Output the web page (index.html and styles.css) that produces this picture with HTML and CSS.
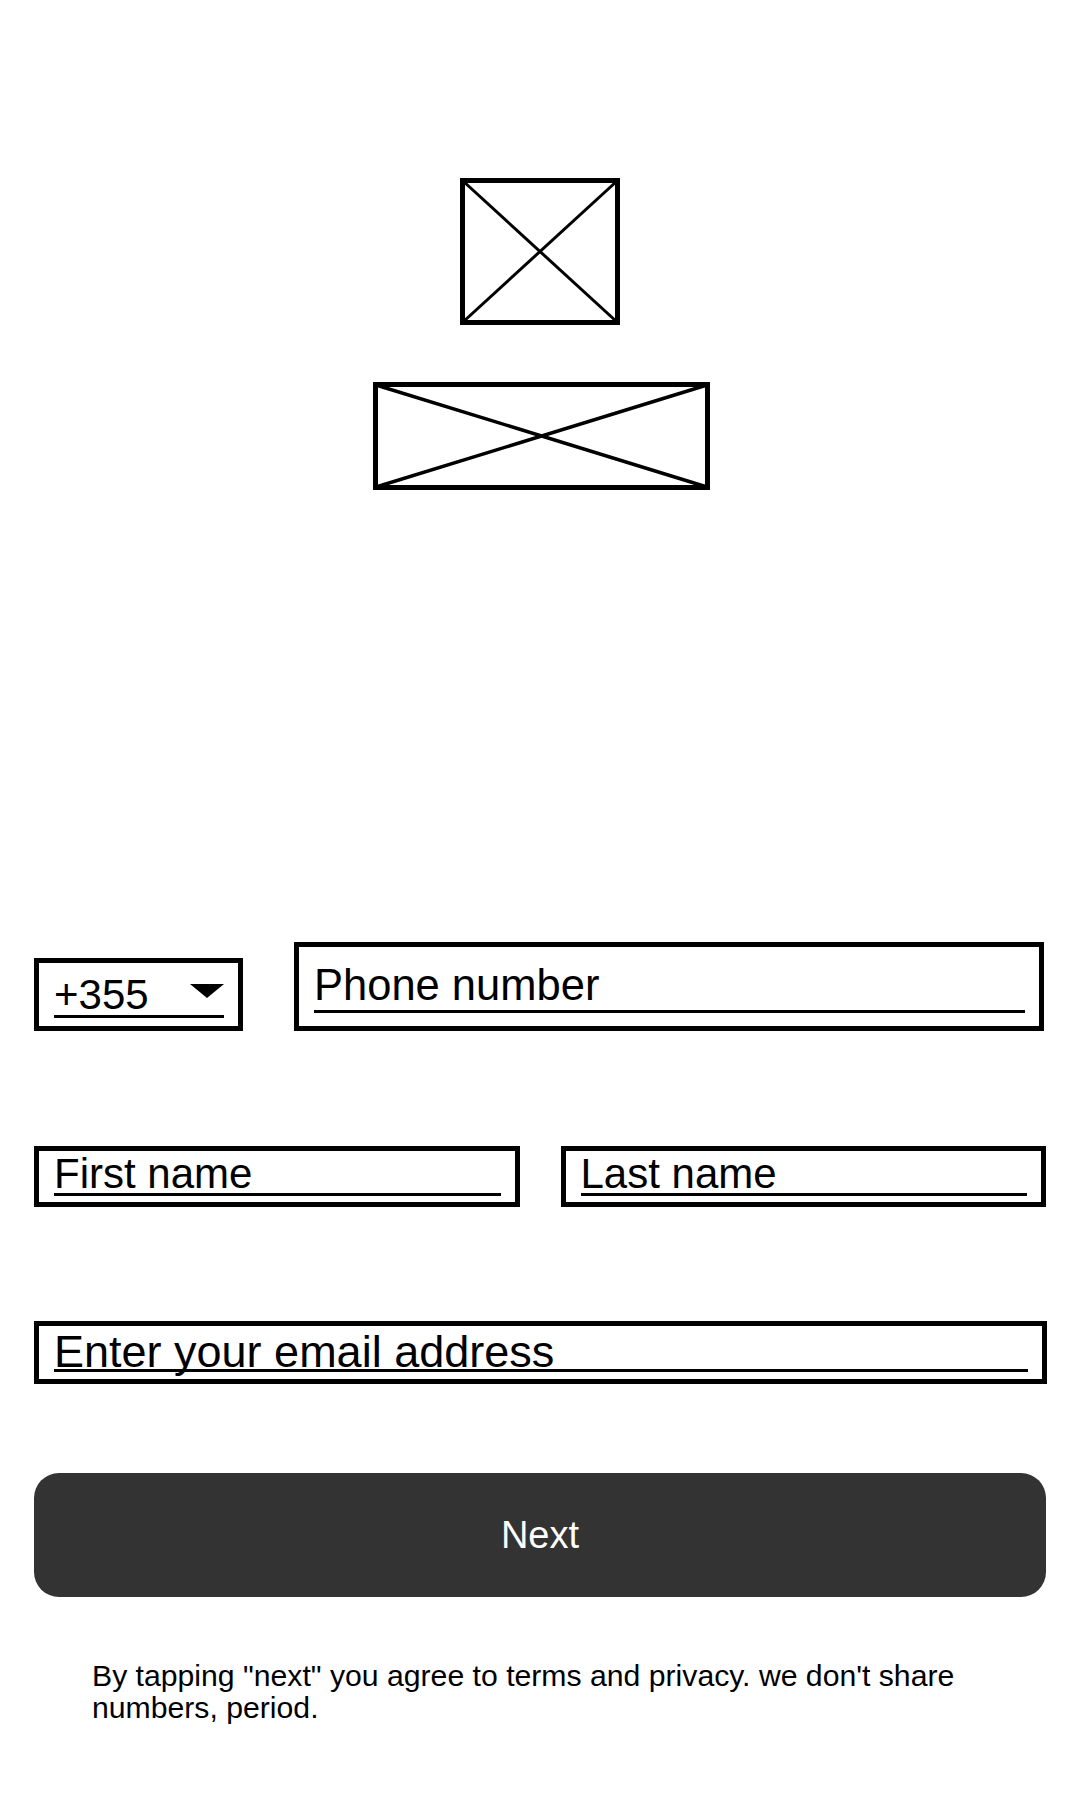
FILE: index.html
```html
<!DOCTYPE html>
<html lang="en">
<head>
<meta charset="UTF-8">
<title>Sign up</title>
<link rel="stylesheet" href="styles.css">
</head>
<body>

<div class="page">
  <!-- placeholders: logo + title image -->
  <div class="hero">
    <svg class="ph ph-logo" width="160" height="147" viewBox="0 0 160 147" aria-hidden="true">
      <rect x="2.5" y="2.5" width="155" height="142" fill="none" stroke="#000" stroke-width="5"/>
      <line x1="3" y1="3" x2="157" y2="144" stroke="#000" stroke-width="3"/>
      <line x1="157" y1="3" x2="3" y2="144" stroke="#000" stroke-width="3"/>
    </svg>
    <svg class="ph ph-title" width="337" height="108" viewBox="0 0 337 108" aria-hidden="true">
      <rect x="2.5" y="2.5" width="332" height="103" fill="none" stroke="#000" stroke-width="5"/>
      <line x1="3" y1="3" x2="334" y2="105" stroke="#000" stroke-width="3.5"/>
      <line x1="334" y1="3" x2="3" y2="105" stroke="#000" stroke-width="3.5"/>
    </svg>
  </div>

  <!-- formularz -->
  <form class="form">
    <div class="row row-phone">
      <div class="field field-code">
        <div class="line">+355<span class="caret"></span></div>
      </div>
      <div class="field field-phone">
        <div class="line">Phone number</div>
      </div>
    </div>

    <div class="row row-names">
      <div class="field field-name"><div class="line">First name</div></div>
      <div class="field field-name"><div class="line">Last name</div></div>
    </div>

    <div class="row row-email">
      <div class="field field-email"><div class="line">Enter your email address</div></div>
    </div>

    <button type="button" class="next">Next</button>

    <p class="terms">By tapping "next" you agree to terms and privacy. we don't share numbers, period.</p>
  </form>
</div>

</body>
</html>
```

FILE: styles.css
```css
/* ─── Reset ─── */
*,*::before,*::after{box-sizing:border-box;margin:0;padding:0}
body{font-family:"Liberation Sans",Arial,Helvetica,sans-serif;background:#fff;color:#000}

.page{width:1080px;display:flex;flex-direction:column}

/* ─── Obrazki zastępcze ─── */
.hero{display:flex;flex-direction:column;align-items:center;padding-top:178px}
.ph{display:block}
.ph-title{margin-top:57px;margin-left:3px}

/* ─── Formularz ─── */
.form{display:flex;flex-direction:column;padding:0 34px;margin-top:452px}
.row{display:flex}
.row-phone{align-items:flex-end;gap:51px}
.row-names{gap:41px;margin-top:115px}
.row-email{margin-top:114px}

.field{border:5px solid #000;background:#fff}
.field .line{border-bottom:3px solid #000;white-space:nowrap;position:relative}

.field-code{width:209px;padding:12px 14px 8px 15px}
.field-code .line{font-size:42px;line-height:40px}
.caret{position:absolute;right:0;top:9px;width:0;height:0;border-left:17px solid transparent;border-right:17px solid transparent;border-top:14px solid #000}

.field-phone{flex:1;padding:13px 14px 13px 15px;margin-right:2px}
.field-phone .line{font-size:43.5px;line-height:50px}

.field-name{flex:1;padding:3px 14px 6px 15px}
.field-name .line{font-size:42px;line-height:39px}

.field-email{flex:1;padding:9px 14px 7px 15px;margin-right:-1px}
.field-email .line{font-size:45px;line-height:34px}

/* ─── Przycisk ─── */
.next{margin-top:89px;height:124px;width:100%;border:none;border-radius:25px;background:#333;color:#fff;font-family:inherit;font-size:38px;cursor:pointer}

/* ─── Stopka ─── */
.terms{margin:63px 58px 0;font-size:30.2px;line-height:32px}
```
